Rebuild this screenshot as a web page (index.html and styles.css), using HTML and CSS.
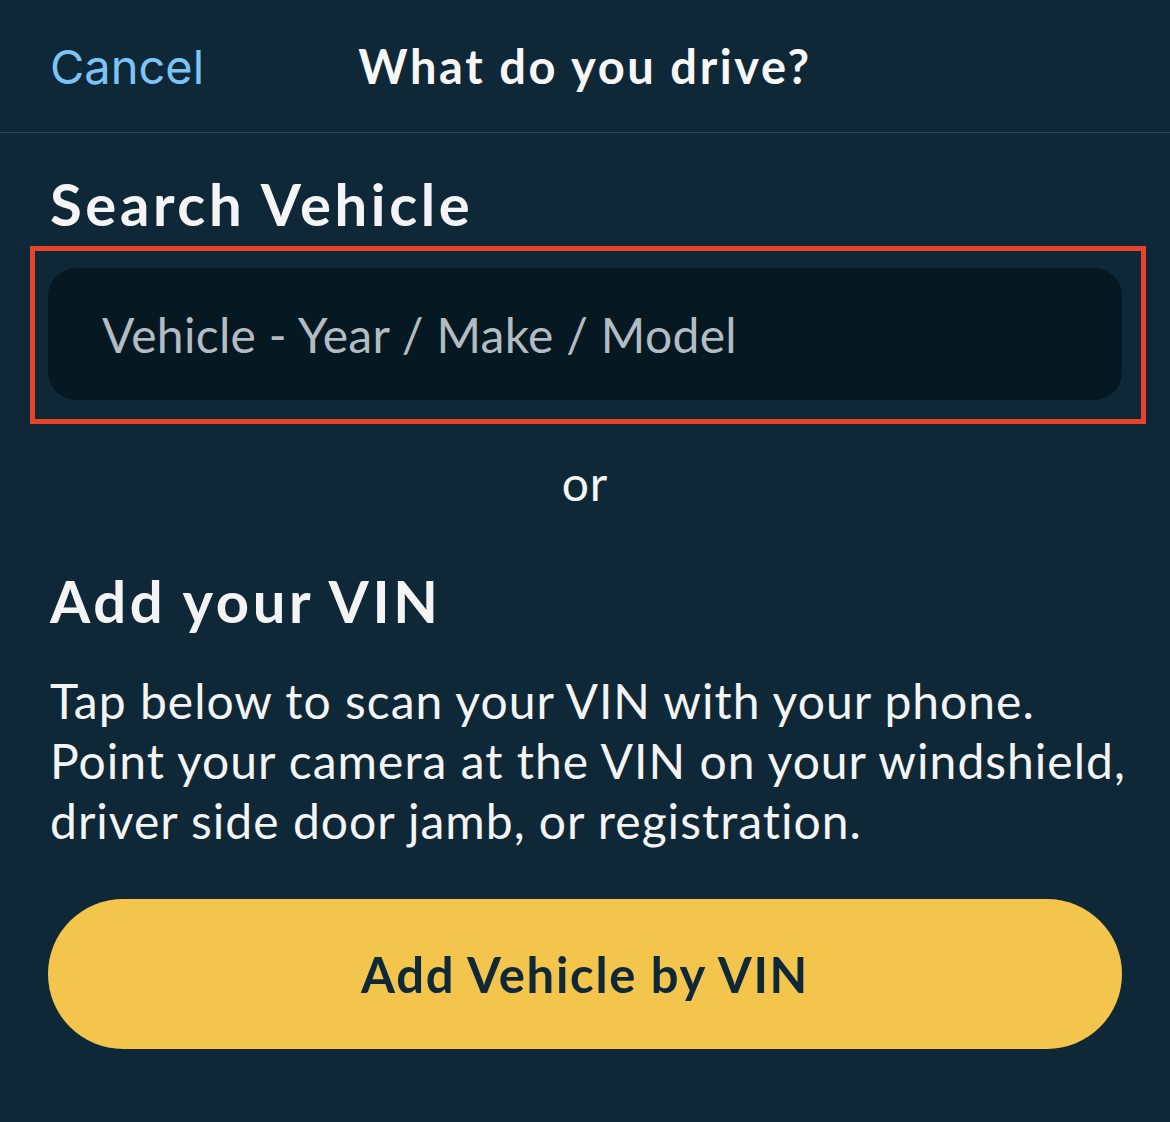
FILE: index.html
```html
<!DOCTYPE html>
<html lang="en">

<head>
    <meta charset="UTF-8">
    <meta name="viewport" content="width=device-width, initial-scale=1.0">
    <title>What do you drive?</title>
    <link rel="stylesheet" href="styles.css">
</head>

<body>

    <header class="nav">
        <a class="nav-cancel" href="#">Cancel</a>
        <h1 class="nav-title">What do you drive?</h1>
    </header>

    <main class="content">
        <h2 class="section-title search-title">Search Vehicle</h2>
        <div class="search-frame">
            <input class="search-input" type="text" placeholder="Vehicle - Year / Make / Model">
        </div>

        <p class="or">or</p>

        <h2 class="section-title vin-title">Add your VIN</h2>
        <p class="vin-text">Tap below to scan your VIN with your phone. Point your camera at the VIN on your windshield, driver side door jamb, or registration.</p>

        <button class="vin-button" type="button">Add Vehicle by VIN</button>
    </main>

</body>

</html>
```

FILE: styles.css
```css
body {
    font-family: Lato, "Noto Sans", sans-serif;
    margin: 0;
    background-color: #0f2837;
    color: #f4f4f4;
}

.nav {
    height: 132px;
    border-bottom: 1px solid #2b4451;
    display: grid;
    grid-template-columns: 1fr auto 1fr;
    align-items: center;
}

.nav-cancel {
    justify-self: start;
    padding-left: 50px;
    color: #7ec3f5;
    text-decoration: none;
    font-family: Inter, "Liberation Sans", sans-serif;
    font-size: 47px;
}

.nav-title {
    margin: 0;
    font-size: 47px;
    font-weight: 700;
    letter-spacing: 2.6px;
    color: #f7f7f7;
}

.content {
    padding: 0 48px;
}

.section-title {
    margin: 0 2px;
    font-size: 58px;
    font-weight: 700;
    line-height: 68px;
    letter-spacing: 3.6px;
}

.search-title {
    margin-top: 37px;
}

.search-frame {
    margin: 8px -24px 0 -18px;
    padding: 17px 19px 19px 13px;
    border: 5px solid #e8432a;
}

.search-input {
    display: block;
    width: 100%;
    box-sizing: border-box;
    height: 132px;
    padding: 0 54px;
    border: none;
    border-radius: 28px;
    background-color: #061821;
    color: #f4f4f4;
    font-family: inherit;
    font-size: 48px;
    letter-spacing: 0.3px;
    outline: none;
}

.search-input::placeholder {
    color: #b3bcc2;
}

.or {
    margin: 29px 0 0;
    text-align: center;
    font-size: 48px;
    line-height: 60px;
    letter-spacing: 1px;
}

.vin-title {
    margin-top: 54px;
}

.vin-text {
    margin: 36px -30px 0 2px;
    font-size: 48px;
    line-height: 60px;
    letter-spacing: 1px;
}

.vin-button {
    display: block;
    width: 100%;
    height: 150px;
    margin-top: 48px;
    border: none;
    border-radius: 75px;
    background-color: #f3c54c;
    color: #0f2837;
    font-family: inherit;
    font-size: 49px;
    font-weight: 700;
    letter-spacing: 1.7px;
    cursor: pointer;
}
```
